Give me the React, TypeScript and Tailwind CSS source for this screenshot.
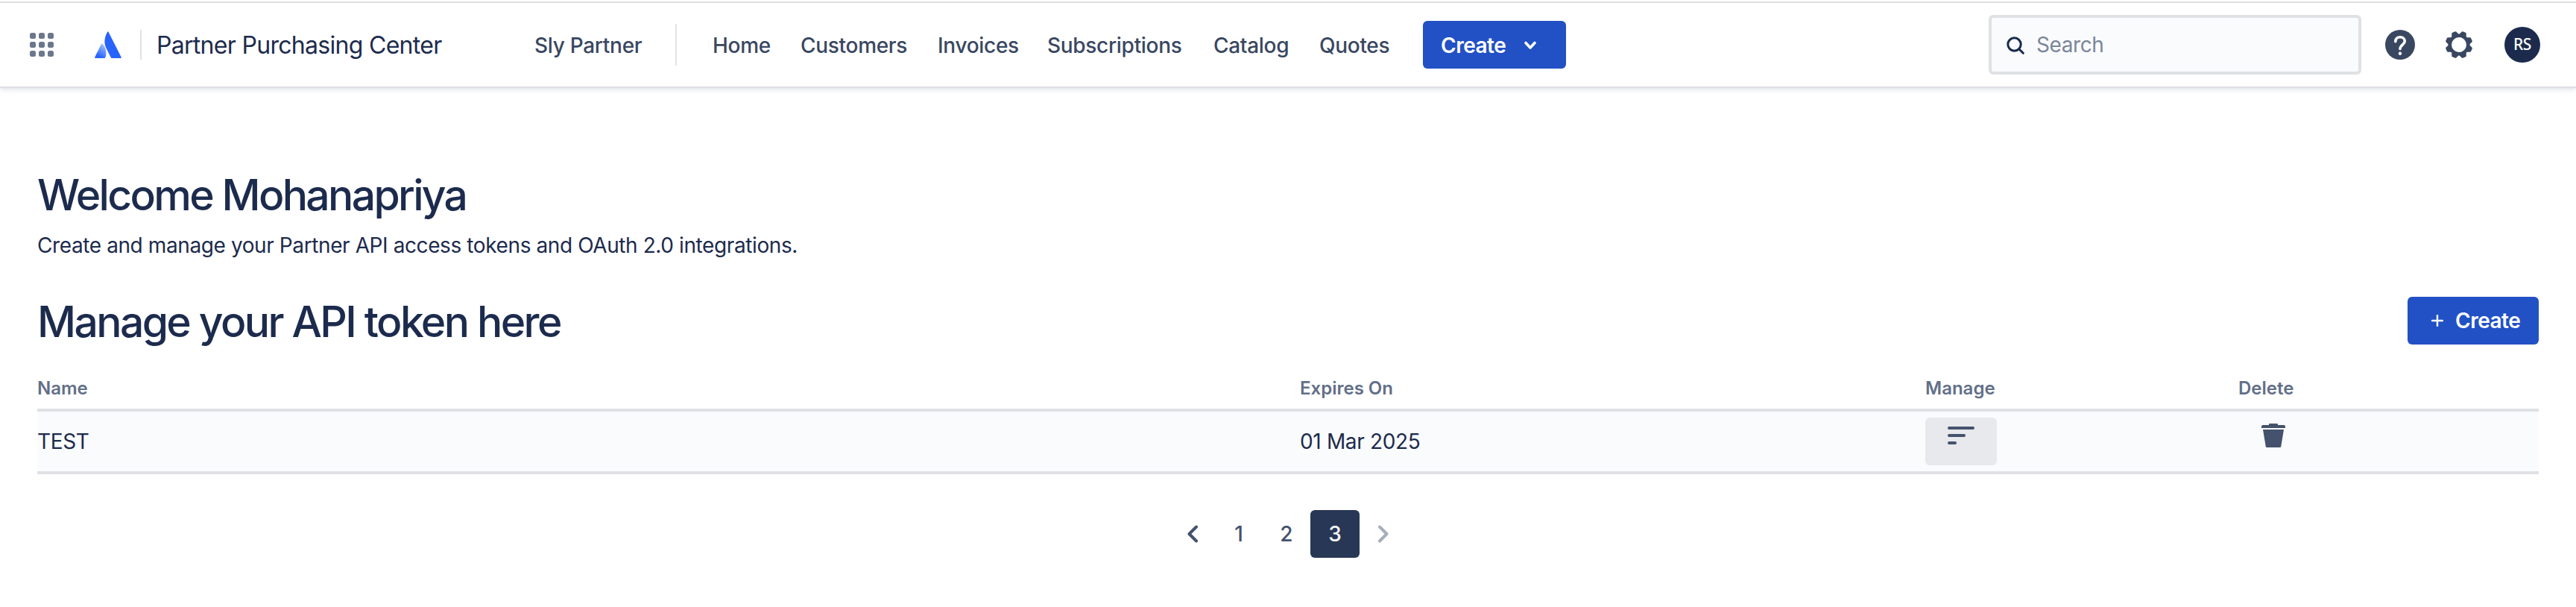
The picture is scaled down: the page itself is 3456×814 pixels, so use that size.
import React from 'react'

const navItems = [
  { label: 'Home', width: 'w-[118px]' },
  { label: 'Customers', width: 'w-[184px]' },
  { label: 'Invoices', width: 'w-[147px]' },
  { label: 'Subscriptions', width: 'w-[223px]' },
  { label: 'Catalog', width: 'w-[142px]' },
  { label: 'Quotes', width: 'w-[139px]' },
]

const tokens = [{ name: 'TEST', expires: '01 Mar 2025' }]

const AppSwitcherIcon = () => (
  <svg width="32" height="32" viewBox="0 0 32 32" fill="#6b778c">
    {[0, 12, 24].map((y) => [0, 12, 24].map((x) => (
      <rect key={`${x}-${y}`} x={x} y={y} width="8" height="8" rx="2.500" />
    )))}
  </svg>
)

const Logo = () => (
  <svg width="36" height="36" viewBox="0 0 36 36">
    <defs>
      <linearGradient id="logoShade" x1="14" y1="18" x2="5" y2="33" gradientUnits="userSpaceOnUse">
        <stop offset="0" stopColor="#a9c4ff" />
        <stop offset="1" stopColor="#2864fa" />
      </linearGradient>
    </defs>
    <path d="M8.600 17.600Q9.600 16 10.900 17.300C15.500 22.500 16.500 29 14.300 35.200Q14 36 13 36H1Q-.300 36 .200 34.700Z" fill="url(#logoShade)" />
    <path d="M17 1Q17.700-.600 18.600 1L35.700 34.700Q36.200 36 35 36H23Q22.200 36 21.800 35.200L15 21.500C12 14.500 13.500 7.500 17 1Z" fill="#2864fa" />
  </svg>
)

const HelpIcon = () => (
  <svg width="40" height="40" viewBox="0 0 40 40">
    <circle cx="20" cy="20" r="20" fill="#394761" />
    <path d="M13.800 15.800C13.800 12 16.300 9.700 20 9.700S26.300 12 26.300 15.300C26.300 19.500 20 20.300 20 25.600" fill="none" stroke="#fff" strokeWidth="3.600" strokeLinecap="round" />
    <circle cx="20" cy="31.800" r="2.200" fill="#fff" />
  </svg>
)

const GearIcon = () => (
  <svg width="36" height="36" viewBox="-18 -18 36 36" fill="none" stroke="#394761">
    <circle r="12.300" strokeWidth="4.600" />
    {[22.5, 67.5, 112.5, 157.5, 202.5, 247.5, 292.5, 337.5].map((angle) => (
      <path key={angle} d="M-5-13.300L-3.400-17.300Q-3-18.300-2-18.300H2Q3-18.300 3.400-17.300L5-13.300Z" fill="#394761" stroke="none" transform={`rotate(${angle})`} />
    ))}
  </svg>
)

const Header = () => (
  <header className="flex h-[118px] items-center border-b-2 border-[#dfdfe5] pt-[4px] pl-10 pr-12 shadow-[0_2px_6px_rgba(9,30,66,0.13)]">
    <AppSwitcherIcon />
    <div className="ml-[55px]">
      <Logo />
    </div>
    <div className="ml-[25px] h-10 w-[2px] bg-[#dfe1e4]" />
    <div className="ml-[20px] w-[507px] pt-[2px] text-[32px] tracking-[-0.7px] text-[#1c2b4d]">Partner Purchasing Center</div>
    <div className="w-[189px] pt-[2px] text-[28px] font-medium tracking-[-0.3px] text-[#394761]">Sly Partner</div>
    <div className="h-14 w-[2px] bg-[#dfe1e4]" />
    <nav className="ml-[48px] flex pt-[2px] text-[28px] font-medium tracking-[-0.3px] text-[#394761]">
      {navItems.map((item) => (
        <a key={item.label} className={item.width}>{item.label}</a>
      ))}
    </nav>
    <button className="flex h-16 w-[192px] items-center rounded-md bg-[#2251c5] pl-6 text-[28px] font-semibold tracking-[-0.5px] text-white">
      <span className="w-[112px] pt-[2px] text-left">Create</span>
      <svg width="16" height="12" viewBox="0 0 16 12" fill="none" stroke="#fff" strokeWidth="3.600" strokeLinecap="round" strokeLinejoin="round" className="mt-[2px]">
        <path d="M2 2.500L8 9L14 2.500" />
      </svg>
    </button>

    {/* search and profile */}
    <div className="ml-auto flex h-20 w-[500px] items-center rounded-md border-4 border-[#dfe1e4] bg-[#fafbfd] pl-5">
      <svg width="24" height="24" viewBox="0 0 24 24" fill="none" stroke="#172b4d" strokeWidth="3" strokeLinecap="round" className="mt-[2px]">
        <circle cx="10.500" cy="10.500" r="8.700" />
        <path d="M17 17L22.300 22.300" />
      </svg>
      <span className="ml-4 text-[28px] tracking-[-0.4px] text-[#7a869a]">Search</span>
    </div>
    <div className="ml-8">
      <HelpIcon />
    </div>
    <div className="ml-[41px]">
      <GearIcon />
    </div>
    <div className="ml-[43px] flex h-12 w-12 items-center justify-center rounded-full bg-[#1c2b4d] font-['Noto_Sans'] text-[21px] font-medium tracking-[-0.5px] text-white">
      RS
    </div>
  </header>
)

const TokenTable = () => (
  <div className="mt-[45px]">
    <div className="grid h-[41px] grid-cols-[1694px_839px_420px_1fr] text-[24px] leading-7 font-semibold text-[#626f88]">
      <div>Name</div>
      <div>Expires On</div>
      <div>Manage</div>
      <div>Delete</div>
    </div>
    {tokens.map((token) => (
      <div key={token.name} className="grid h-[88px] grid-cols-[1694px_839px_420px_1fr] items-center border-y-4 border-[#dfe1e4] bg-[#fafbfd] text-[28px] tracking-[-0.35px] text-[#1c2b4d]">
        <div>{token.name}</div>
        <div>{token.expires}</div>
        <button className="flex h-16 w-24 items-start rounded-md bg-[#e8e9ed] pt-3 pl-[30px]">
          <svg width="36" height="24" viewBox="0 0 36 24" fill="#44526d">
            <rect width="36" height="4" rx="2" />
            <rect y="10" width="24" height="4" rx="2" />
            <rect y="20" width="12" height="4" rx="2" />
          </svg>
        </button>
        <button className="flex h-16 w-24 items-start pt-2 pl-[31px]">
          <svg width="32" height="32" viewBox="0 0 32 32" fill="#44526d">
            <path d="M0 6V4Q0 2 2 2H10V1Q10 0 11 0H21Q22 0 22 1V2H30Q32 2 32 4V6Z" />
            <path d="M2 8H30L26.200 31Q26 32 25 32H7Q6 32 5.800 31Z" />
          </svg>
        </button>
      </div>
    ))}
  </div>
)

const Pagination = () => (
  <div className="mt-12 flex h-16 items-center pl-[1542px] text-[28px] font-medium text-[#44526d]">
    <svg width="16" height="24" viewBox="0 0 16 24" fill="none" stroke="#44526d" strokeWidth="4" strokeLinecap="round" strokeLinejoin="round">
      <path d="M13 2.500L3.500 12L13 21.500" />
    </svg>
    <span className="ml-[24px] w-[60px] text-center">1</span>
    <span className="ml-[14px] w-[40px] text-center">2</span>
    <span className="ml-[12px] flex h-16 w-[66px] items-center justify-center rounded-md bg-[#283755] text-[#f4f5f7]">3</span>
    <svg className="ml-[24px]" width="16" height="24" viewBox="0 0 16 24" fill="none" stroke="#a7aebb" strokeWidth="4" strokeLinecap="round" strokeLinejoin="round">
      <path d="M3 2.500L12.500 12L3 21.500" />
    </svg>
  </div>
)

const App = () => {
  return (
    <div className="h-[814px] bg-white font-['Inter','Liberation_Sans',sans-serif]">
      <div className="-mb-[4px] h-[4px] border-b-2 border-[#e0e0e2]" />
      <Header />
      <main className="px-[50px] pt-[112px] text-[#1c2b4d]">
        <h1 className="text-[57px] leading-16 font-medium tracking-[-2.65px]">Welcome Mohanapriya</h1>
        <p className="mt-[15px] text-[28px] leading-10 tracking-[-0.4px]">Create and manage your Partner API access tokens and OAuth 2.0 integrations.</p>
        <div className="mt-[49px] flex h-16 items-center justify-between">
          <h2 className="pt-[3px] text-[57px] leading-16 font-medium tracking-[-2.6px]">Manage your API token here</h2>
          <button className="flex h-16 w-[176px] items-center rounded-md bg-[#2251c5] pl-8 text-[28px] font-semibold tracking-[-0.5px] text-white">
            <svg width="16" height="16" viewBox="0 0 16 16" stroke="#fff" strokeWidth="2.400" strokeLinecap="round">
              <path d="M8 1V15M1 8H15" />
            </svg>
            <span className="ml-[16px]">Create</span>
          </button>
        </div>
        <TokenTable />
        <Pagination />
      </main>
    </div>
  )
}

export default App
